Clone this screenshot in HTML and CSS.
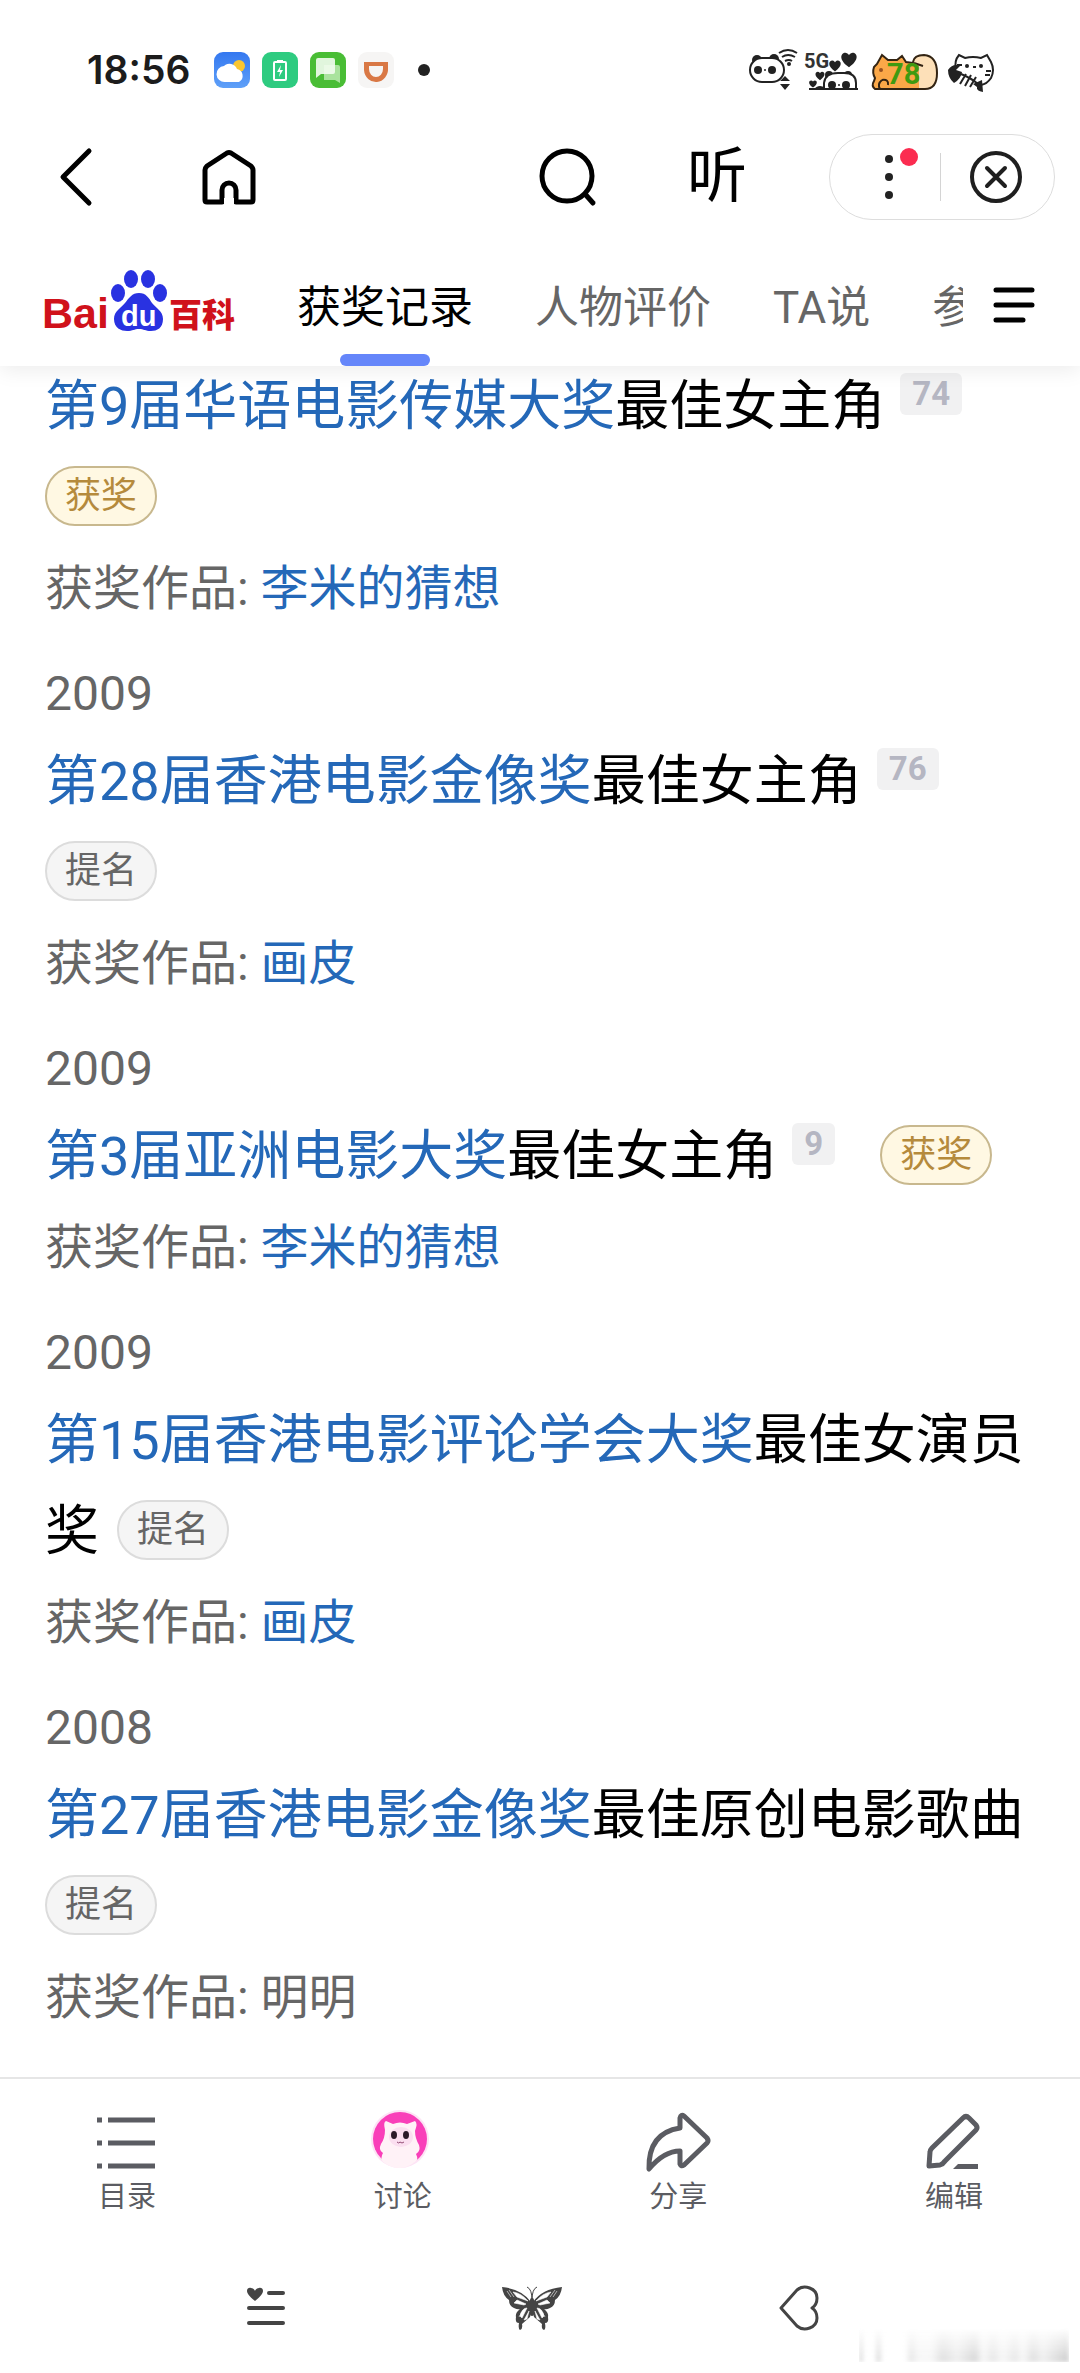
FILE: index.html
```html
<!DOCTYPE html>
<html lang="zh-CN">
<head>
<meta charset="utf-8">
<meta name="viewport" content="width=device-width, initial-scale=1">
<title>获奖记录 - 百度百科</title>
<link rel="stylesheet" href="styles.css">
</head>
<body>
<header class="header">
  <div class="status">
    <span class="status-time">18:56</span>
    <div class="status-apps">
      <svg width="36" height="36" viewBox="0 0 36 36" aria-hidden="true">
        <defs><linearGradient id="sky" x1="0" y1="0" x2="0" y2="1"><stop offset="0" stop-color="#3478f0"/><stop offset="1" stop-color="#5fa0f8"/></linearGradient></defs>
        <rect width="36" height="36" rx="9" fill="url(#sky)"/><circle cx="25" cy="14" r="6" fill="#fbc62f"/>
        <path d="M11 30a8 8 0 0 1-1-16 8 8 0 0 1 13 3 7 7 0 0 1 2 13z" fill="#fff"/>
      </svg>
      <svg width="36" height="36" viewBox="0 0 36 36" aria-hidden="true">
        <rect width="36" height="36" rx="9" fill="#2ecb80"/><path d="M15 8h6v3h-6z" fill="#fff"/><rect x="12" y="10" width="12" height="18" rx="1" fill="none" stroke="#fff" stroke-width="2"/>
        <path d="M19 13l-4 7h3l-1 5 4-7h-3z" fill="#fff"/>
      </svg>
      <svg width="36" height="36" viewBox="0 0 36 36" aria-hidden="true">
        <rect width="36" height="36" rx="9" fill="#49bd35"/><path d="M14 13h14q2 0 2 2v16l-5-3H14z" fill="#a9e39d"/>
        <path d="M8 6h15q2 0 2 2v12q0 2-2 2H11l-5 4V8q0-2 2-2z" fill="#f2fcf0" opacity=".9"/>
      </svg>
      <svg width="36" height="36" viewBox="0 0 36 36" aria-hidden="true">
        <rect width="36" height="36" rx="9" fill="#f6f5f4"/><path d="M6 10h24v6a12 13 0 0 1-24 2zM11 14v3a7 8 0 0 0 14 0v-3z" fill="#d97845" fill-rule="evenodd"/>
      </svg>
    </div>
    <span class="status-dot"></span>
    <div class="status-system">
      <svg width="50" height="44" viewBox="748 48 50 44" aria-hidden="true">
        <circle cx="757" cy="60" r="5" fill="#222"/><circle cx="774" cy="59" r="5" fill="#222"/>
        <rect x="750" y="58" width="34" height="24" rx="12" fill="#fff" stroke="#222" stroke-width="2"/>
        <circle cx="758" cy="70" r="4" fill="#222"/><circle cx="772" cy="70" r="4" fill="#222"/><circle cx="765" cy="70" r="1" fill="#222"/>
        <path d="M779 53q9-6 18 0M782 57q6-4 13 0M785 61q4-2 7 0" fill="none" stroke="#222" stroke-width="2"/><circle cx="789" cy="64" r="2" fill="#222"/>
        <path d="M780 81l5-5 5 5zM780 84h10l-5 6z" fill="#222"/>
      </svg>
      <svg width="54" height="44" viewBox="804 48 54 44" aria-hidden="true">
        <text class="signal-label" x="804" y="68">5G</text>
        <defs><path id="heart" d="M0 6C-9 0-7-6-3-6-1-6 0-4 0-4S1-6 3-6C7-6 9 0 0 6Z"/></defs>
        <g fill="#222"><use href="#heart" transform="translate(849 60) scale(1.2)"/><use href="#heart" transform="translate(835 66) scale(.9)"/><use href="#heart" transform="translate(820 76) scale(.7)"/><use href="#heart" transform="translate(813 84) scale(.6)"/>
        <circle cx="829" cy="75" r="4"/><circle cx="848" cy="75" r="4"/><path d="M813 90q6-7 12-2v2z"/></g>
        <path d="M824 89V83q1-10 14-10h6q12 0 12 10v6" fill="#fff" stroke="#222" stroke-width="2"/>
        <circle cx="832" cy="85" r="4" fill="#222"/><circle cx="846" cy="85" r="4" fill="#222"/><circle cx="839" cy="85" r="1" fill="#222"/>
        <path d="M809 89h49" stroke="#222" stroke-width="2"/>
      </svg>
      <svg class="battery" width="68" height="44" viewBox="871 48 68 44" role="img" aria-label="78%">
        <path d="M913 62q1-7 11-7 13 1 13 18 0 16-12 16h-18z" fill="#fde0b8" stroke="#332413" stroke-width="2"/>
        <path d="M875 89q-4-3-1-8l1-3q-3-5-1-11l3-3 5-9 6 5h9l5-4 4 6 13 2v25z" fill="#fba848"/>
        <path d="M921 89h-46q-4-3-1-8l1-3q-3-5-1-11l3-3 5-9 6 5h9l5-4 4 6 7 1M882 80q7-1 6 5M880 89q-3-5 2-9M914 63l9 3" fill="none" stroke="#332413" stroke-width="2"/>
        <circle cx="881" cy="70" r="2" fill="#975121"/><text class="battery-label" x="887" y="84">78</text>
      </svg>
      <svg width="48" height="44" viewBox="947 48 48 44" aria-hidden="true">
        <path d="M956 69q-2-8 3-14l6 3q8-2 16 0l6-3 4 7q4 8 0 16-4 6-10 7" fill="#fff" stroke="#222" stroke-width="2"/>
        <circle cx="967" cy="66" r="2" fill="#222"/><circle cx="981" cy="66" r="2" fill="#222"/><path d="M973 67h3M986 71h5M985 75h5M957 65h5" stroke="#222" stroke-width="2"/>
        <path d="M948 70q5-7 12-4l-4 4 6 2q-1 7-8 11-6-5-6-13zM973 84l9-4 1 12q-7-1-6-5z" fill="#222"/>
        <path d="M961 74q10 4 17 10M966 74l-6 10M971 75l-6 11M976 77l-6 10" fill="none" stroke="#222" stroke-width="2"/>
      </svg>
    </div>
  </div>

  <div class="toolbar">
    <button class="icon-button" aria-label="返回"><svg width="32" height="58" viewBox="0 0 32 58"><path d="M29 3L3 29l26 26" class="line"/></svg></button>
    <button class="icon-button home" aria-label="主页"><svg width="54" height="56" viewBox="0 0 54 56"><path d="M20 53H5q-2 0-2-2V21q0-2 2-4L25 4q2-1 4 0l20 13q2 2 2 4v30q0 2-2 2H34V41a7 7 0 0 0-14 0z" class="line home-line"/><path d="M22 56h10V49H22z" fill="#fff"/></svg></button>
    <div class="toolbar-end">
      <button class="icon-button" aria-label="搜索"><svg width="56" height="58" viewBox="0 0 56 58"><circle cx="27" cy="28" r="25" class="line"/><path d="M45 46l8 9" class="line"/></svg></button>
      <button class="icon-button listen">听</button>
      <div class="capsule">
        <button class="icon-button more" aria-label="更多"><svg width="40" height="60" viewBox="0 0 40 60"><g fill="#222"><circle cx="11" cy="12" r="4"/><circle cx="11" cy="30" r="4"/><circle cx="11" cy="48" r="4"/></g><circle cx="31" cy="10" r="9" fill="#fb2c50"/></svg></button>
        <span class="capsule-divider"></span>
        <button class="icon-button close" aria-label="关闭"><svg width="52" height="52" viewBox="0 0 52 52"><circle cx="26" cy="26" r="24" fill="none" stroke="#1f1f1f" stroke-width="4"/><path d="M17 17l18 18M35 17L17 35" stroke="#1f1f1f" stroke-width="4" stroke-linecap="round"/></svg></button>
      </div>
    </div>
  </div>

  <nav class="tabs" aria-label="词条章节">
    <a class="logo" href="#" aria-label="百度百科">
      <svg width="190" height="62" viewBox="45 270 190 62">
        <text class="logo-latin" x="42" y="328">Bai</text>
        <g fill="#2932e1"><ellipse cx="118" cy="293" rx="7" ry="9"/><ellipse cx="131" cy="279" rx="7" ry="9"/><ellipse cx="148" cy="279" rx="7" ry="9"/><ellipse cx="160" cy="293" rx="7" ry="9"/>
        <path d="M139 293c7 0 10 5 13 10 4 5 11 8 11 16 0 9-6 12-12 12s-7-2-12-2-6 2-12 2-13-3-13-12c0-8 7-11 11-16 4-5 7-10 14-10z"/></g>
        <text class="logo-du" x="121" y="326">du</text>
        <text class="logo-cjk" x="169" y="327">百科</text>
      </svg>
    </a>
    <div class="tab-list">
      <a class="tab tab-active" href="#">获奖记录</a>
      <a class="tab" href="#">人物评价</a>
      <a class="tab" href="#">TA说</a>
      <a class="tab" href="#">参考资料</a>
    </div>
    <button class="icon-button menu" aria-label="目录菜单"><svg width="42" height="36" viewBox="0 0 42 36"><path d="M3 3h36M3 18h36M3 33h27" class="line"/></svg></button>
  </nav>
</header>

<main class="awards">
  <article class="award">
    <h2 class="award-title"><a href="#">第9届华语电影传媒大奖</a>最佳女主角<sup class="ref">74</sup><span class="tag tag-win">获奖</span></h2>
    <p class="work">获奖作品: <a href="#">李米的猜想</a></p>
  </article>
  <article class="award">
    <p class="year">2009</p>
    <h2 class="award-title"><a href="#">第28届香港电影金像奖</a>最佳女主角<sup class="ref">76</sup><span class="tag">提名</span></h2>
    <p class="work">获奖作品: <a href="#">画皮</a></p>
  </article>
  <article class="award">
    <p class="year">2009</p>
    <h2 class="award-title"><a href="#">第3届亚洲电影大奖</a>最佳女主角<sup class="ref">9</sup><span class="tag tag-win tag-inline">获奖</span></h2>
    <p class="work">获奖作品: <a href="#">李米的猜想</a></p>
  </article>
  <article class="award">
    <p class="year">2009</p>
    <h2 class="award-title"><a href="#">第15届香港电影评论学会大奖</a>最佳女演员奖<span class="tag tag-inline">提名</span></h2>
    <p class="work">获奖作品: <a href="#">画皮</a></p>
  </article>
  <article class="award">
    <p class="year">2008</p>
    <h2 class="award-title"><a href="#">第27届香港电影金像奖</a>最佳原创电影歌曲<span class="tag">提名</span></h2>
    <p class="work">获奖作品: 明明</p>
  </article>
</main>

<footer class="footer">
  <div class="actions">
    <button class="action"><svg width="60" height="60" viewBox="0 0 60 60"><path d="M0 9h5M11 9h47M0 32h5M11 32h47M0 55h5M11 55h47" stroke="#5b5c62" stroke-width="5"/></svg>目录</button>
    <button class="action"><svg width="60" height="60" viewBox="0 0 60 60">
      <circle cx="27" cy="28" r="29" fill="#fde3f5"/><circle cx="27" cy="28" r="27" fill="#f93fb9"/>
      <path d="M12 19q-2-8 1-9l7 3q7-3 14 0l8-3q3 2 0 10 0 7 4 14 2 6-3 9 3 6-1 8-8 6-15 6-9 0-17-6-3-4 0-9-5-3-2-9 4-6 4-14z" fill="#fff2f7"/>
      <ellipse cx="28" cy="26" rx="12" ry="10" fill="#fbdff0"/><ellipse cx="21" cy="24" rx="3" ry="4" fill="#2b1a28"/><ellipse cx="33" cy="24" rx="3" ry="4" fill="#2b1a28"/>
      <path d="M24 31q2 2 3 0 2 2 4 0" fill="none" stroke="#934c74"/></svg>讨论</button>
    <button class="action"><svg class="share" width="64" height="60" viewBox="0 0 64 60"><path d="M34 17V7q1-4 4-2l23 22q2 3 0 5L38 54q-3 2-4-1V40Q18 40 3 58 2 22 34 17z" class="gray-line"/></svg>分享</button>
    <button class="action"><svg width="60" height="60" viewBox="0 0 60 60"><path d="M5 55l1-14q0-2 2-4L39 7q3-3 6 0l7 7q2 3 0 5L21 50q-2 3-5 4z" class="gray-line"/><path d="M29 58l5-5h20v5z" fill="#5b5c62"/></svg>编辑</button>
  </div>
  <div class="system-nav">
    <button class="icon-button" aria-label="最近任务"><svg width="38" height="44" viewBox="0 0 38 44"><path d="M8 15C-4 6 0 1 4 2c3 0 4 3 4 3s1-3 4-3c4-1 8 4-4 13z" fill="#444"/><path d="M22 7h14M2 22h34M2 37h34" stroke="#444" stroke-width="4" stroke-linecap="round"/></svg></button>
    <button class="icon-button" aria-label="主屏幕"><svg width="62" height="44" viewBox="0 0 62 44">
      <g id="wing"><path d="M30 16Q21 3 1 1q1 9 7 13 0 6 5 8 4 2 6 1-5 4-4 8-1 6 3 6-1 6 1 7 3-1 2-6l8-7 2-8z" fill="#444"/>
      <path d="M27 15Q20 7 12 6l4 5zM25 18l-9-4-3 3 10 2zM26 22q-5 0-7 8l2 2zM28 25l-5 9 3-1zM6 5l4 6M8 4l5 7M21 26l-3 5" fill="#fff" stroke="#fff" stroke-width=".6"/></g>
      <use href="#wing" transform="translate(62 0) scale(-1 1)"/>
      <path d="M31 14v14" stroke="#444" stroke-width="4" stroke-linecap="round"/><path d="M31 14Q31 3 26 1M31 14q0-11 5-13" fill="none" stroke="#444"/></svg></button>
    <button class="icon-button" aria-label="后退"><svg width="40" height="46" viewBox="0 0 40 46"><path d="M2 23L18 5c7-6 20-2 20 8q0 7-5 10 5 3 5 10c0 10-13 14-20 8z" fill="none" stroke="#444" stroke-width="3" stroke-linejoin="round"/></svg></button>
  </div>
  <div class="watermark" aria-hidden="true"></div>
</footer>
</body>
</html>
```

FILE: styles.css
```css
* { box-sizing: border-box; }

body {
  margin: 0;
  min-height: 100vh;
  display: flex;
  flex-direction: column;
  background: #fff;
  color: #000;
  font-family: Roboto, "Noto Sans CJK SC", sans-serif;
}

a { color: inherit; text-decoration: none; }
svg { display: block; flex: none; overflow: visible; }
h2, p { margin: 0; font-weight: 400; }
button { font-family: inherit; color: inherit; border: 0; padding: 0; background: none; }
.icon-button { display: block; flex: none; }

.line {
  fill: none;
  stroke: #000;
  stroke-width: 5;
  stroke-linecap: round;
  stroke-linejoin: round;
}
.gray-line { fill: none; stroke: #5b5c62; stroke-width: 5; stroke-linejoin: round; }

/* Header */
.header {
  position: sticky;
  top: 0;
  z-index: 2;
  background: #fff;
  box-shadow: 0 4px 20px rgba(0, 0, 0, .08);
}

.status {
  display: flex;
  align-items: center;
  padding: 48px 85px 42px 87px;
}
.status-time { font-family: Inter, sans-serif; font-weight: 600; font-size: 39px; line-height: 44px; color: #1c1c1c; }
.status-apps { display: flex; gap: 12px; margin-left: 24px; }
.status-dot { width: 12px; height: 12px; margin-left: 24px; border-radius: 50%; background: #222; }
.status-system { display: flex; gap: 6px; margin-left: auto; }
.battery { margin: 0 2px 0 7px; }
.signal-label { font: 700 20px Roboto, sans-serif; fill: #333; }
.battery-label { font: 700 29px Roboto, sans-serif; fill: #3f9a10; }

.toolbar {
  display: flex;
  align-items: center;
  padding: 0 25px 0 60px;
}
.home { margin-left: 110px; }
.home-line { stroke-linecap: butt; }
.toolbar-end { display: flex; align-items: center; margin-left: auto; }
.listen { margin: 0 82px 0 91px; font-size: 60px; line-height: 60px; }
.capsule {
  display: flex;
  align-items: center;
  width: 226px;
  height: 86px;
  padding: 0 32px 0 48px;
  border: 1px solid #ddd;
  border-radius: 43px;
}
.capsule-divider { width: 1px; height: 48px; margin-left: 22px; background: #d4d4d4; }
.close { margin-left: auto; }

.tabs { display: flex; align-items: flex-start; padding: 0 45px; }
.logo { flex: none; margin-top: 50px; }
.logo-latin { font: 700 43px "Liberation Sans", sans-serif; fill: #d0121b; }
.logo-du { font: 700 29px "Liberation Sans", sans-serif; fill: #fff; }
.logo-cjk { font: 900 33px "Noto Sans CJK SC", sans-serif; fill: #d0121b; }
.tab-list { display: flex; flex: 1; gap: 62px; margin-left: 62px; overflow: hidden; }
.tab { flex: none; padding-top: 58px; font-size: 44px; line-height: 60px; color: #666; }
.tab-active { color: #000; }
.tab::after { content: ""; display: block; width: 90px; height: 12px; margin: 16px auto 0; border-radius: 6px; }
.tab-active::after { background: #6586fa; }
.menu { margin: 67px 0 0 30px; }

/* Award list; its first line starts just under the header edge */
.awards { flex: 1; margin-top: -5px; padding: 0 45px; }
.award { padding-bottom: 45px; }
.year { padding-bottom: 12px; font-size: 48px; line-height: 60px; color: #666; }
.award-title { font-size: 54px; line-height: 91px; }
.award-title a, .work a { color: #2468b8; }
.work { margin-top: 16px; font-size: 48px; line-height: 60px; color: #666; }
.ref {
  display: inline-block;
  margin: 0 27px 0 15px;
  padding: 0 12px;
  border-radius: 6px;
  background: #f1f1f2;
  color: #b5b6c2;
  font-size: 33px;
  font-weight: 700;
  line-height: 42px;
  vertical-align: 20px;
}
.tag {
  display: inline-block;
  padding: 0 18px;
  border: 2px solid #dcdcdc;
  border-radius: 30px;
  background: #f5f5f5;
  color: #666;
  font-size: 36px;
  line-height: 56px;
  vertical-align: 8px;
}
.tag-win { border-color: #c8b88e; background: #fff8e3; color: #b58a3c; }
.tag-inline { margin-left: 18px; }

/* Bottom bars */
.footer { position: sticky; bottom: 0; background: #fff; border-top: 2px solid #e6e6e6; }
.actions { display: flex; justify-content: space-between; padding: 32px 96px 0 97px; }
.action {
  display: flex;
  flex-direction: column;
  align-items: center;
  width: 60px;
  font-size: 29px;
  line-height: 40px;
  color: #5b5c62;
  white-space: nowrap;
}
.action svg { margin-bottom: 6px; }
.system-nav { display: flex; justify-content: space-between; align-items: center; padding: 68px 261px 42px 247px; }
.watermark {
  position: absolute;
  right: 11px;
  bottom: 11px;
  width: 210px;
  height: 34px;
  filter: blur(2px);
  opacity: .5;
  background: linear-gradient(90deg, #bbb 0 3px, #fff 5px 16px, #bbb 18px 20px, #fff 24px 46px, #ccc 52px, #eee 60px 72px, #bbb 84px, #ddd 98px, #aaa 116px, #eee 124px, #ccc 134px, #eee 144px, #ccc 156px, #eee 164px, #bbb 174px, #ddd 184px, #999 208px);
  -webkit-mask-image: linear-gradient(transparent, #000);
  mask-image: linear-gradient(transparent, #000);
}
```
